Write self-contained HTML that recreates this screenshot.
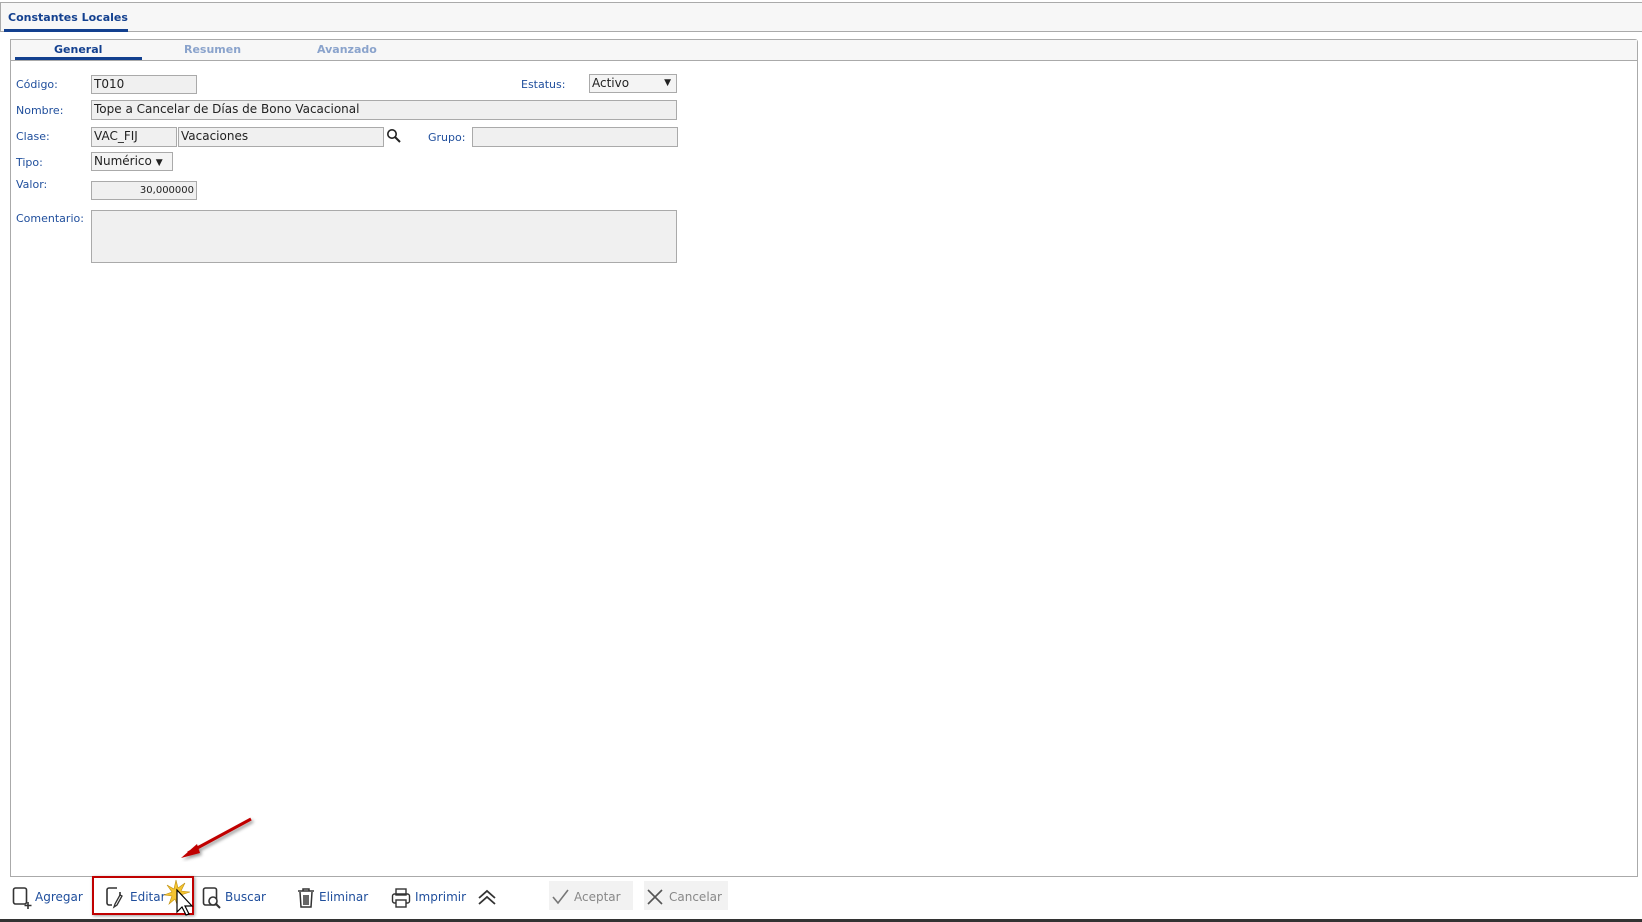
<!DOCTYPE html>
<html><head><meta charset="utf-8"><style>
body{margin:0;width:1642px;height:922px;background:#fff;position:relative;overflow:hidden;font-family:"DejaVu Sans","Liberation Sans",sans-serif;}
.a{position:absolute}
.lbl{position:absolute;font-size:11px;color:#1f4e9c;}
.in{position:absolute;background:#f0f0f0;border:1px solid #aaa;box-sizing:border-box;font-size:12px;color:#222;padding:1px 2px;line-height:15px;white-space:nowrap;overflow:hidden}
.tb{position:absolute;font-size:12px;color:#1f4e9c;top:890px}
</style></head><body>
<div class="a" style="left:0;top:2px;width:1642px;height:30px;background:#f7f7f7;border-top:1px solid #aaa;border-bottom:1px solid #aaa;border-left:1px solid #aaa;box-sizing:border-box"></div>
<div class="a" style="left:8px;top:11px;font-size:11px;font-weight:bold;color:#13408f">Constantes Locales</div>
<div class="a" style="left:4px;top:29px;width:124px;height:3px;background:#13408f"></div>
<div class="a" style="left:10px;top:39px;width:1628px;height:838px;border:1px solid #aaa;box-sizing:border-box;border-radius:0 3px 0 0"></div>
<div class="a" style="left:11px;top:40px;width:1626px;height:20px;background:#f7f7f7;border-bottom:1px solid #aaa"></div>
<div class="a" style="left:54px;top:43px;font-size:11px;font-weight:bold;color:#13408f">General</div>
<div class="a" style="left:15px;top:57px;width:127px;height:3px;background:#13408f"></div>
<div class="a" style="left:184px;top:43px;font-size:11px;font-weight:bold;color:#8aa3cc">Resumen</div>
<div class="a" style="left:317px;top:43px;font-size:11px;font-weight:bold;color:#8aa3cc">Avanzado</div>

<div class="lbl" style="left:16px;top:78px">Código:</div>
<div class="in" style="left:91px;top:75px;width:106px;height:19px">T010</div>
<div class="lbl" style="left:521px;top:78px">Estatus:</div>
<div class="in" style="left:589px;top:74px;width:88px;height:19px;background:#f4f4f4">Activo<span style="position:absolute;right:5px;font-size:9px">▼</span></div>
<div class="lbl" style="left:16px;top:104px">Nombre:</div>
<div class="in" style="left:91px;top:100px;width:586px;height:20px">Tope a Cancelar de Días de Bono Vacacional</div>
<div class="lbl" style="left:16px;top:130px">Clase:</div>
<div class="in" style="left:91px;top:127px;width:86px;height:20px">VAC_FIJ</div>
<div class="in" style="left:178px;top:127px;width:206px;height:20px">Vacaciones</div>
<svg class="a" style="left:386px;top:128px" width="16" height="16"><circle cx="6" cy="6" r="4.2" fill="none" stroke="#222" stroke-width="1.6"/><path d="M9 9l5 5" stroke="#222" stroke-width="2"/></svg>
<div class="lbl" style="left:428px;top:131px">Grupo:</div>
<div class="in" style="left:472px;top:127px;width:206px;height:20px"></div>
<div class="lbl" style="left:16px;top:156px">Tipo:</div>
<div class="in" style="left:91px;top:152px;width:82px;height:19px;background:#f4f4f4">Numérico <span style="font-size:9px">▼</span></div>
<div class="lbl" style="left:16px;top:178px">Valor:</div>
<div class="in" style="left:91px;top:181px;width:106px;height:19px;font-size:10px;text-align:right">30,000000</div>
<div class="lbl" style="left:16px;top:212px">Comentario:</div>
<div class="in" style="left:91px;top:210px;width:586px;height:53px"></div>

<svg class="a" style="left:0;top:800px" width="300" height="80"><defs><filter id="s"><feDropShadow dx="2" dy="2" stdDeviation="1.5" flood-opacity=".4"/></filter></defs><g filter="url(#s)"><path d="M251 19L188 53" stroke="#c00000" stroke-width="3"/><path d="M181 58l16-14l3 9z" fill="#c00000"/></g></svg>

<svg class="a" style="left:12px;top:886px" width="20" height="24"><rect x="1.5" y="2" width="13" height="16" rx="2" fill="none" stroke="#333" stroke-width="1.6"/><path d="M16 16v7M12.5 19.5h7" stroke="#333" stroke-width="1.6"/></svg>
<div class="tb" style="left:35px">Agregar</div>
<div class="a" style="left:92px;top:876px;width:102px;height:39px;border:2px solid #c00000;box-sizing:border-box;box-shadow:1px 1px 3px rgba(0,0,0,.4)"></div>
<svg class="a" style="left:105px;top:886px" width="20" height="24"><path d="M12 2H4a2 2 0 0 0-2 2v13a2 2 0 0 0 2 2h3M15 6v4" fill="none" stroke="#333" stroke-width="1.6"/><path d="M15 9l-5 9l-1 3l3-2l5-9z" fill="none" stroke="#333" stroke-width="1.3"/></svg>
<div class="tb" style="left:130px">Editar</div>
<svg class="a" style="left:163px;top:878px" width="32" height="42"><path d="M13 2l2 8 7-5-4 8 9 1-9 3 6 7-8-4-1 9-3-8-6 5 3-8-8-1 8-3-5-7 7 4z" fill="#f4c431" stroke="#c09010" stroke-width=".6"/><path d="M14 12v22l5-5 4 8 3-1-4-8h7z" fill="#fff" stroke="#000" stroke-width="1.2"/></svg>
<svg class="a" style="left:202px;top:886px" width="20" height="24"><rect x="1.5" y="2" width="13" height="17" rx="2" fill="none" stroke="#333" stroke-width="1.6"/><circle cx="11" cy="15" r="4" fill="#fff" stroke="#333" stroke-width="1.6"/><path d="M14 18l4 4" stroke="#333" stroke-width="2"/></svg>
<div class="tb" style="left:225px">Buscar</div>
<svg class="a" style="left:297px;top:887px" width="18" height="22"><path d="M1 4h16M6 4V2h6v2M3 5l1 15h10l1-15M7 8v10M9 8v10M11 8v10" fill="none" stroke="#333" stroke-width="1.5"/></svg>
<div class="tb" style="left:319px">Eliminar</div>
<svg class="a" style="left:391px;top:887px" width="20" height="22"><rect x="5" y="2" width="10" height="6" fill="none" stroke="#333" stroke-width="1.4"/><rect x="1.5" y="7" width="17" height="9" rx="2" fill="none" stroke="#333" stroke-width="1.4"/><rect x="5" y="13" width="10" height="7" fill="#fff" stroke="#333" stroke-width="1.4"/></svg>
<div class="tb" style="left:415px">Imprimir</div>
<svg class="a" style="left:477px;top:888px" width="20" height="18"><path d="M2 10l8-7 8 7M2 16l8-7 8 7" fill="none" stroke="#333" stroke-width="1.8"/></svg>
<div class="a" style="left:549px;top:881px;width:84px;height:29px;background:#f2f2f2"></div>
<svg class="a" style="left:551px;top:888px" width="20" height="18"><path d="M2 9l5 6 10-13" fill="none" stroke="#777" stroke-width="1.6"/></svg>
<div class="tb" style="left:574px;color:#888">Aceptar</div>
<div class="a" style="left:644px;top:881px;width:84px;height:29px;background:#f2f2f2"></div>
<svg class="a" style="left:646px;top:888px" width="18" height="18"><path d="M2 2l14 14M16 2L2 16" stroke="#555" stroke-width="1.6"/></svg>
<div class="tb" style="left:669px;color:#888">Cancelar</div>
<div class="a" style="left:0;top:919px;width:1642px;height:3px;background:#333"></div>
</body></html>
